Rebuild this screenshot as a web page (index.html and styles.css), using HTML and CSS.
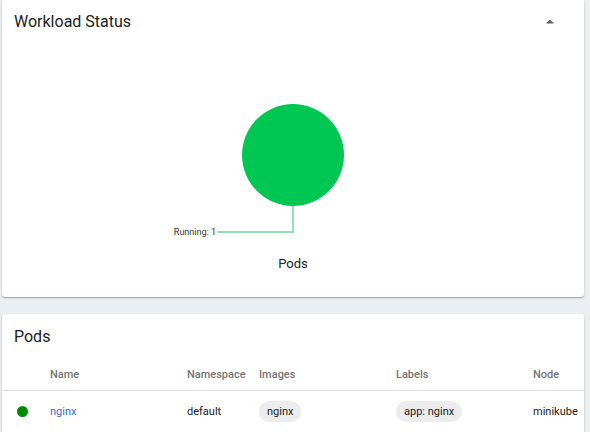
FILE: index.html
```html
<!DOCTYPE html>
<html>
<head>
<meta charset="utf-8">
<link rel="stylesheet" href="styles.css">
</head>
<body>
<div class="page">
  <section class="card status">
    <div class="card-head">
      <h2 class="card-title">Workload Status</h2>
      <svg class="collapse" width="8" height="5" viewBox="0 0 8 5"><path d="M0 4.5 L4 0.5 L8 4.5 Z" fill="#616161"/></svg>
    </div>
    <svg class="chart" width="582" height="210" viewBox="0 0 582 210">
      <path d="M291 164 V190 H215" fill="none" stroke="#8fe3b0" stroke-width="2"/>
      <circle cx="291" cy="113" r="51" fill="#00c752"/>
      <text x="214" y="193" text-anchor="end" class="chart-label">Running: 1</text>
    </svg>
    <div class="chart-caption">Pods</div>
  </section>

  <section class="card pods">
    <div class="card-head">
      <h2 class="card-title">Pods</h2>
    </div>
    <div class="table">
      <div class="row head">
        <div class="cell"></div>
        <div class="cell">Name</div>
        <div class="cell">Namespace</div>
        <div class="cell">Images</div>
        <div class="cell">Labels</div>
        <div class="cell">Node</div>
      </div>
      <div class="row body">
        <div class="cell"><span class="dot"></span></div>
        <div class="cell"><a class="link" href="#">nginx</a></div>
        <div class="cell">default</div>
        <div class="cell"><span class="chip">nginx</span></div>
        <div class="cell"><span class="chip">app: nginx</span></div>
        <div class="cell">minikube</div>
      </div>
    </div>
  </section>
</div>
</body>
</html>
```

FILE: styles.css
```css
* { box-sizing: border-box; }
html, body {
  margin: 0;
  padding: 0;
  background: #eceff1;
  font-family: Roboto, "Liberation Sans", sans-serif;
  color: #212121;
  overflow: hidden;
}
.page {
  display: flex;
  flex-direction: column;
  gap: 17px;
  padding: 0 6px 0 2px;
  width: 590px;
}
.card {
  background: #fff;
  border-radius: 0 0 3px 3px;
  box-shadow: 0 1px 2px rgba(0,0,0,.25), 0 1px 1px rgba(0,0,0,.12);
}
.pods { border-radius: 3px 3px 0 0; }
.card-head {
  display: flex;
  align-items: center;
  justify-content: space-between;
  height: 42px;
  padding: 0 30px 0 12px;
}
.pods .card-head { height: 45px; }
.card-title {
  margin: 0;
  font-size: 16px;
  font-weight: 400;
  color: #212121;
}
.chart { display: block; }
.chart-label {
  font-family: Roboto, "Liberation Sans", sans-serif;
  font-size: 9px;
  fill: #333;
}
.chart-caption {
  text-align: center;
  font-size: 13px;
  line-height: 24px;
  height: 45px;
  color: #212121;
}
.row {
  display: grid;
  grid-template-columns: 48px 137px 72px 137px 137px 1fr;
  align-items: center;
}
.row.head {
  height: 32px;
  border-bottom: 1px solid #e0e0e0;
  color: #757575;
  font-size: 11px;
  font-weight: 500;
}
.row.body {
  height: 41px;
  font-size: 11px;
  color: #212121;
}
.dot {
  display: block;
  width: 11px;
  height: 11px;
  border-radius: 50%;
  background: #008a00;
  margin-left: 15px;
}
.link { color: #326de6; text-decoration: none; }
.chip {
  display: inline-block;
  background: #ececec;
  border-radius: 11px;
  height: 21px;
  line-height: 21px;
  padding: 0 8px;
}
```
